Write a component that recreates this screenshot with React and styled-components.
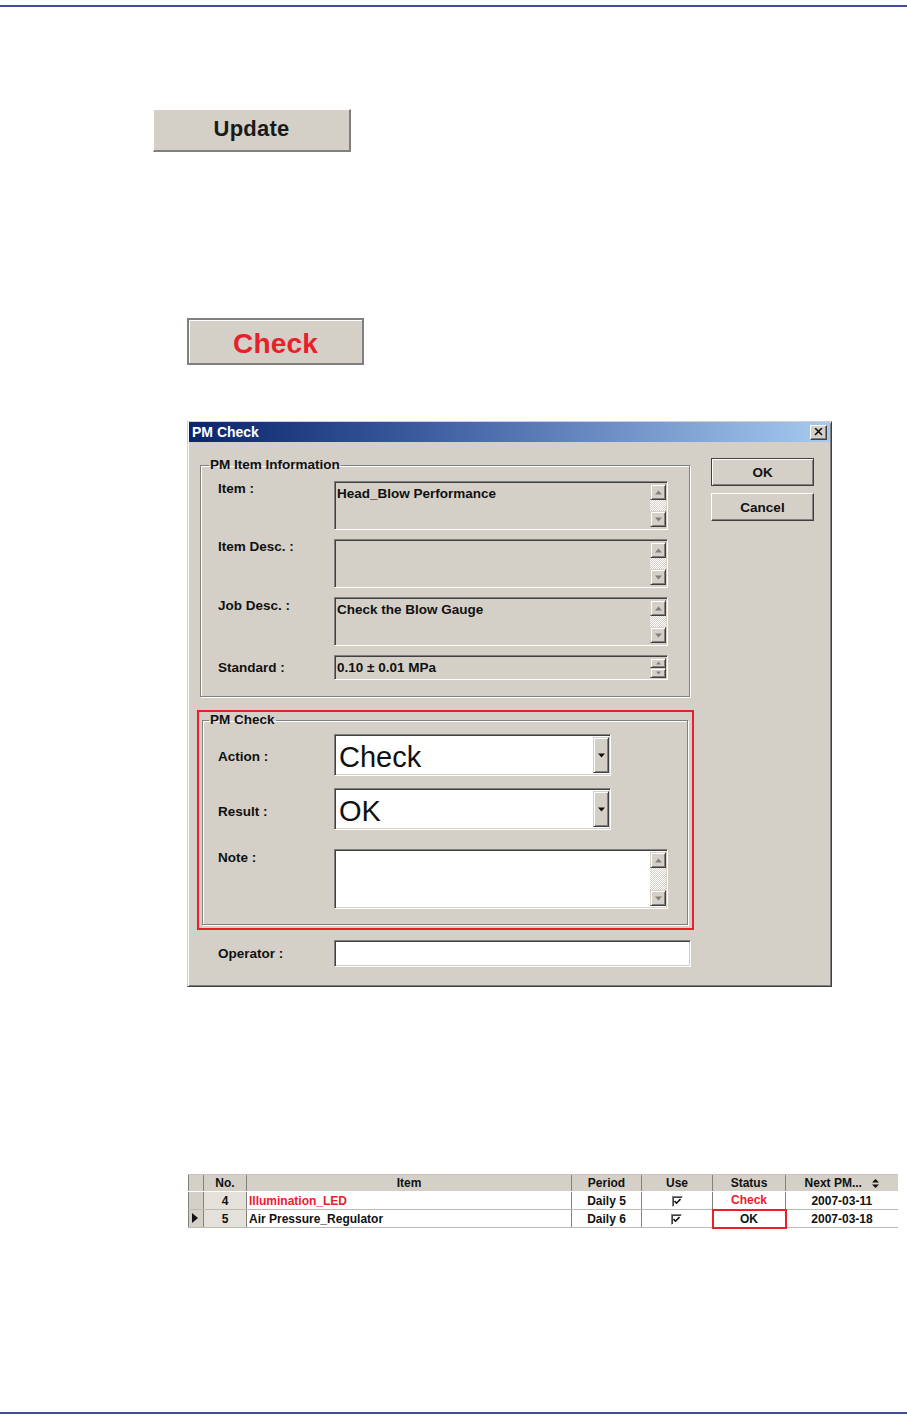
import React from "react";
import styled, { createGlobalStyle } from "styled-components";

const FACE = "#d4d0c8";
const SHADOW = "#808080";
const DARK = "#404040";
const RED = "#e8202a";
const FONT = `"Liberation Sans", Arial, sans-serif`;

const Global = createGlobalStyle`
  html, body { margin: 0; padding: 0; background: #fff; }
  body { font-family: ${FONT}; color: #111; }
  * { box-sizing: border-box; }
`;

const Page = styled.div`
  width: 907px;
  height: 1424px;
  display: flex;
  flex-direction: column;
  background: #fff;
`;

const Rule = styled.div`
  height: 2px;
  width: 100%;
  background: #3f4c9f;
  margin-top: ${(p) => p.$top}px;
`;

const BigButton = styled.div`
  margin-top: ${(p) => p.$top}px;
  margin-left: ${(p) => p.$left}px;
  width: ${(p) => p.$w}px;
  height: ${(p) => p.$h}px;
  background: ${FACE};
  display: flex;
  align-items: center;
  justify-content: center;
  font-family: ${FONT};
  font-weight: bold;
  font-size: ${(p) => p.$size}px;
  color: ${(p) => p.$color};
  letter-spacing: 0.2px;
`;

const UpdateButton = styled(BigButton)`
  border-top: 1px solid #fff;
  border-left: 1px solid #fff;
  border-right: 2px solid ${SHADOW};
  border-bottom: 2px solid ${SHADOW};
  padding-bottom: 2px;
`;

const CheckButton = styled(BigButton)`
  border: 2px solid ${SHADOW};
  box-shadow: inset 1px 1px 0 #fff;
  padding-top: 5px;
`;

/* ---------- Dialog ---------- */
const Dialog = styled.div`
  margin-top: 56px;
  margin-left: 187px;
  width: 645px;
  height: 566px;
  background: ${FACE};
  border: 1px solid;
  border-color: ${FACE} ${DARK} ${DARK} ${FACE};
  box-shadow: inset 1px 1px 0 #fff, inset -1px -1px 0 ${SHADOW};
  padding: 0 1px 1px 1px;
  display: flex;
  flex-direction: column;
  font-family: ${FONT};
`;

const TitleBar = styled.div`
  height: 20px;
  background: linear-gradient(to right, #0a246a 0%, #3a5a9e 35%, #a6caf0 100%);
  display: flex;
  align-items: center;
  justify-content: space-between;
  padding: 0 3px 0 3px;
  color: #fff;
  font-weight: bold;
  font-size: 14px;
`;

const CloseBtn = styled.div`
  width: 17px;
  height: 15px;
  background: ${FACE};
  border: 1px solid;
  border-color: #fff ${DARK} ${DARK} #fff;
  box-shadow: inset -1px -1px 0 ${SHADOW};
  display: flex;
  align-items: center;
  justify-content: center;
`;

const Body = styled.div`
  display: flex;
  padding: 16px 0 0 8px;
  gap: 17px;
`;

const LeftCol = styled.div`
  width: 497px;
  display: flex;
  flex-direction: column;
`;

const RightCol = styled.div`
  width: 103px;
  display: flex;
  flex-direction: column;
  gap: 7px;
`;

const DlgButton = styled.div`
  height: 28px;
  background: ${FACE};
  display: flex;
  align-items: center;
  justify-content: center;
  font-weight: bold;
  font-size: 13.5px;
  border: 1px solid;
  border-color: ${(p) => (p.$default ? DARK : "#fff")} ${DARK} ${DARK}
    ${(p) => (p.$default ? DARK : "#fff")};
  box-shadow: ${(p) =>
    p.$default
      ? `inset 1px 1px 0 #fff, inset -1px -1px 0 ${SHADOW}`
      : `inset -1px -1px 0 ${SHADOW}`};
`;

const Group = styled.fieldset`
  margin: 0 ${(p) => p.$mr}px 0 ${(p) => p.$ml}px;
  min-width: 0;
  border: 1px solid ${SHADOW};
  box-shadow: inset 1px 1px 0 #fff, 1px 1px 0 #fff;
  padding: ${(p) => p.$pt}px 0 ${(p) => p.$pb}px ${(p) => p.$pl}px;
  display: grid;
  grid-template-columns: 117px auto;
  row-gap: ${(p) => p.$gap}px;
  justify-content: start;
`;

const Legend = styled.legend`
  font-weight: bold;
  font-size: 13.5px;
  line-height: 14px;
  padding: 0 1px;
  margin-left: ${(p) => p.$ml}px;
  color: #111;
`;

const Label = styled.div`
  font-weight: bold;
  font-size: 13.5px;
  line-height: 16px;
  align-self: ${(p) => (p.$center ? "center" : "start")};
  padding-top: ${(p) => p.$pt || 0}px;
  margin-top: ${(p) => p.$mt || 0}px;
  padding-left: 1px;
`;

const Cell = styled.div`
  margin-top: ${(p) => p.$mt || 0}px;
`;

const Sunken = styled.div`
  width: ${(p) => p.$w}px;
  height: ${(p) => p.$h}px;
  background: ${(p) => (p.$white ? "#fff" : FACE)};
  border: 1px solid;
  border-color: ${SHADOW} #fff #fff ${SHADOW};
  box-shadow: inset 1px 1px 0 ${DARK}, inset -1px -1px 0 ${FACE};
  display: flex;
  padding: 2px 1px 2px 2px;
`;

const FieldText = styled.div`
  flex: 1;
  font-weight: ${(p) => (p.$big ? "normal" : "bold")};
  font-size: ${(p) => (p.$big ? 29 : 13.5)}px;
  line-height: ${(p) => (p.$big ? "36px" : "16px")};
  padding-left: ${(p) => (p.$big ? 2 : 0)}px;
  padding-top: ${(p) => (p.$big ? 2 : 2)}px;
  white-space: nowrap;
  color: #111;
`;

const ScrollCol = styled.div`
  width: 16px;
  display: flex;
  flex-direction: column;
`;

const ArrowBtn = styled.div`
  width: 16px;
  height: ${(p) => p.$h}px;
  flex: none;
  background: ${FACE};
  border: 1px solid;
  border-color: ${FACE} ${DARK} ${DARK} ${FACE};
  box-shadow: inset 1px 1px 0 #fff, inset -1px -1px 0 ${SHADOW};
  display: flex;
  align-items: center;
  justify-content: center;
`;

const Track = styled.div`
  flex: 1;
  background-color: #fff;
  background-image: repeating-conic-gradient(${FACE} 0 25%, #fff 0 50%);
  background-size: 2px 2px;
`;

const DropBtn = styled(ArrowBtn)`
  height: auto;
  align-self: stretch;
  width: 16px;
`;

const RedBox = styled.div`
  margin-top: 13px;
  border: 2px solid ${RED};
  padding: 1px 2px 3px 0;
`;

const OperatorRow = styled.div`
  margin-top: 10px;
  display: grid;
  grid-template-columns: 117px 357px;
  padding-left: 20px;
  align-items: center;
`;

const Tri = ({ dir = "up", color = SHADOW, size = 7 }) => (
  <svg width={size} height={Math.ceil(size / 2) + 1} viewBox="0 0 7 4">
    {dir === "up" ? (
      <polygon points="3.5,0 7,4 0,4" fill={color} />
    ) : (
      <polygon points="0,0 7,0 3.5,4" fill={color} />
    )}
  </svg>
);

const Scroll = () => (
  <ScrollCol>
    <ArrowBtn $h={16}>
      <Tri dir="up" />
    </ArrowBtn>
    <Track />
    <ArrowBtn $h={16}>
      <Tri dir="down" />
    </ArrowBtn>
  </ScrollCol>
);

const Spinner = () => (
  <ScrollCol>
    <ArrowBtn $h={10}>
      <Tri dir="up" size={5} />
    </ArrowBtn>
    <Track />
    <ArrowBtn $h={10}>
      <Tri dir="down" size={5} />
    </ArrowBtn>
  </ScrollCol>
);

const TextBox = ({ h, text, white, w = 334 }) => (
  <Sunken $w={w} $h={h} $white={white}>
    <FieldText>{text}</FieldText>
    <Scroll />
  </Sunken>
);

const Combo = ({ text }) => (
  <Sunken $w={277} $h={42} $white>
    <FieldText $big>{text}</FieldText>
    <DropBtn>
      <Tri dir="down" color="#111" size={7} />
    </DropBtn>
  </Sunken>
);

/* ---------- Grid ---------- */
const Table = styled.table`
  margin-top: 187px;
  margin-left: 188px;
  width: 709px;
  border-collapse: collapse;
  table-layout: fixed;
  font-family: ${FONT};
  font-size: 12px;
  font-weight: bold;
`;

const Th = styled.th`
  height: 17px;
  padding: 0;
  background: ${FACE};
  border-left: 1px solid ${SHADOW};
  border-top: 1px solid #c8c4bc;
  border-bottom: 1px solid #fff;
  font-weight: bold;
  text-align: center;
  color: #111;
`;

const Td = styled.td`
  height: 18px;
  padding: 0 2px;
  background: ${(p) => (p.$gray ? "#e4e1da" : "#fff")};
  border-left: 1px solid ${SHADOW};
  border-bottom: 1px solid #bdbab3;
  text-align: ${(p) => p.$align || "center"};
  color: ${(p) => p.$color || "#111"};
  white-space: nowrap;
  overflow: hidden;
`;

const SelTd = styled(Td)`
  background: ${FACE};
  padding: 0 0 0 3px;
  text-align: left;
`;

const StatusOk = styled.td`
  height: 18px;
  padding: 0;
  background: #fff;
  border: 2px solid ${RED};
  text-align: center;
  color: #111;
`;

const CheckBox = styled.span`
  display: inline-flex;
  width: 11px;
  height: 11px;
  border: 1px solid;
  border-color: ${SHADOW} #fff #fff ${SHADOW};
  box-shadow: inset 1px 1px 0 ${DARK};
  background: #fff;
  align-items: center;
  justify-content: center;
  vertical-align: middle;
`;

const Check = () => (
  <CheckBox>
    <svg width="7" height="7" viewBox="0 0 7 7">
      <polyline points="0.5,3 2.5,5.2 6.5,1" fill="none" stroke="#111" strokeWidth="1.6" />
    </svg>
  </CheckBox>
);

export default function App() {
  return (
    <>
      <Global />
      <Page>
        <Rule $top={5} />
        <UpdateButton $top={102} $left={153} $w={198} $h={43} $size={22} $color="#1a1a1a">
          Update
        </UpdateButton>
        <CheckButton $top={166} $left={187} $w={177} $h={47} $size={28} $color={RED}>
          Check
        </CheckButton>

        <Dialog>
          <TitleBar>
            <span>PM Check</span>
            <CloseBtn>
              <svg width="9" height="8" viewBox="0 0 9 8">
                <path d="M1 0 L8 7 M8 0 L1 7" stroke="#111" strokeWidth="1.6" />
              </svg>
            </CloseBtn>
          </TitleBar>
          <Body>
            <LeftCol>
              <Group $ml={3} $mr={4} $pt={9} $pb={16} $pl={16} $gap={9}>
                <Legend $ml={-8}>PM Item Information</Legend>
                <Label>Item :</Label>
                <TextBox h={49} text="Head_Blow Performance" />
                <Label>Item Desc. :</Label>
                <TextBox h={49} text="" />
                <Label $pt={1}>Job Desc. :</Label>
                <TextBox h={49} text="Check the Blow Gauge" />
                <Label $center>Standard :</Label>
                <Sunken $w={334} $h={25}>
                  <FieldText>0.10 ± 0.01 MPa</FieldText>
                  <Spinner />
                </Sunken>
              </Group>

              <RedBox>
                <Group $ml={3} $mr={2} $pt={7} $pb={15} $pl={14} $gap={12}>
                  <Legend $ml={-8}>PM Check</Legend>
                  <Label $center $pt={3}>Action :</Label>
                  <Combo text="Check" />
                  <Label $center $pt={6}>Result :</Label>
                  <Combo text="OK" />
                  <Label $pt={1} $mt={7}>Note :</Label>
                  <Cell $mt={7}>
                    <TextBox h={60} text="" white />
                  </Cell>
                </Group>
              </RedBox>

              <OperatorRow>
                <Label $center>Operator :</Label>
                <Sunken $w={357} $h={27} $white />
              </OperatorRow>
            </LeftCol>
            <RightCol>
              <DlgButton $default>OK</DlgButton>
              <DlgButton>Cancel</DlgButton>
            </RightCol>
          </Body>
        </Dialog>

        <Table>
          <colgroup>
            <col style={{ width: 15 }} />
            <col style={{ width: 43 }} />
            <col style={{ width: 325 }} />
            <col style={{ width: 70 }} />
            <col style={{ width: 71 }} />
            <col style={{ width: 73 }} />
            <col style={{ width: 112 }} />
          </colgroup>
          <thead>
            <tr>
              <Th />
              <Th>No.</Th>
              <Th>Item</Th>
              <Th>Period</Th>
              <Th>Use</Th>
              <Th>Status</Th>
              <Th>
                Next PM...&nbsp;&nbsp;&nbsp;
                <svg width="7" height="9" viewBox="0 0 7 9" style={{ verticalAlign: "-1px" }}>
                  <polygon points="3.5,0 7,3.5 0,3.5" fill="#111" />
                  <polygon points="0,5.5 7,5.5 3.5,9" fill="#111" />
                </svg>
              </Th>
            </tr>
          </thead>
          <tbody>
            <tr>
              <SelTd />
              <Td $gray>4</Td>
              <Td $align="left" $color={RED}>Illumination_LED</Td>
              <Td>Daily 5</Td>
              <Td>
                <Check />
              </Td>
              <Td $color={RED}>Check</Td>
              <Td>2007-03-11</Td>
            </tr>
            <tr>
              <SelTd>
                <svg width="6" height="10" viewBox="0 0 6 10">
                  <polygon points="0,0 6,5 0,10" fill="#111" />
                </svg>
              </SelTd>
              <Td $gray>5</Td>
              <Td $align="left">Air Pressure_Regulator</Td>
              <Td>Daily 6</Td>
              <Td>
                <Check />
              </Td>
              <StatusOk>OK</StatusOk>
              <Td>2007-03-18</Td>
            </tr>
          </tbody>
        </Table>

        <Rule $top={183} />
      </Page>
    </>
  );
}
